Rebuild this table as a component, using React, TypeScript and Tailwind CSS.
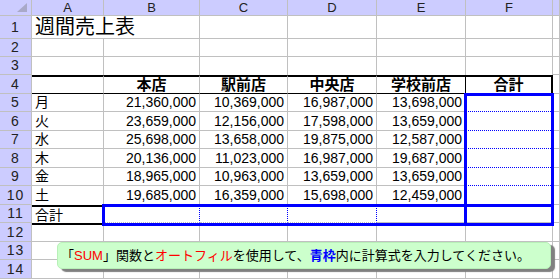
import clsx from 'clsx';

const cols = ['A', 'B', 'C', 'D', 'E', 'F', ''];

const sales: [string, string, string, string, string][] = [
  ['月', '21,360,000', '10,369,000', '16,987,000', '13,698,000'],
  ['火', '23,659,000', '12,156,000', '17,598,000', '13,659,000'],
  ['水', '25,698,000', '13,658,000', '19,875,000', '12,587,000'],
  ['木', '20,136,000', '11,023,000', '16,987,000', '19,687,000'],
  ['金', '18,965,000', '10,963,000', '13,659,000', '13,659,000'],
  ['土', '19,685,000', '16,359,000', '15,698,000', '12,459,000'],
];

const base =
  'border-r border-b border-[#c0c0c0] flex items-center overflow-hidden whitespace-nowrap';
const head = 'bg-[#ccccff] justify-center text-[13px] text-[#222]';

function Cell({
  className,
  children,
}: {
  className?: string;
  children?: React.ReactNode;
}) {
  return <div className={clsx(base, className)}>{children}</div>;
}

function RowHead({ n }: { n: number }) {
  return (
    <Cell className={clsx(head, 'text-[14px] tracking-[1px]')}>{n}</Cell>
  );
}

export default function App() {
  return (
    <div className="w-[560px] h-[280px] overflow-hidden bg-white font-['Liberation_Sans','Noto_Sans_CJK_JP',sans-serif] text-black">
      <div className="relative grid grid-cols-[32px_72px_96px_88px_89px_89px_87px_7px] grid-rows-[16px_23px_18px_18px_19px_18px_19px_18px_19px_18px_19px_18px_19px_18px_19px]">
        {/* column headers */}
        <Cell className={clsx(head, 'justify-end items-end')}>
          <svg width="12" height="10" viewBox="0 0 12 10" className="mb-[2px] mr-[3px]">
            <polygon points="11,0 11,9 1,9" fill="#a9a9c8" />
          </svg>
        </Cell>
        {cols.map((c, i) => (
          <Cell key={i} className={head}>
            {c}
          </Cell>
        ))}

        {/* row 1 */}
        <RowHead n={1} />
        <Cell className="text-[20px] pl-[3px] overflow-visible z-10 border-r-0">週間売上表</Cell>
        {cols.slice(1).map((_, i) => (
          <Cell key={i} />
        ))}

        {/* rows 2-3 */}
        <RowHead n={2} />
        {cols.map((_, i) => (
          <Cell key={i} />
        ))}
        <RowHead n={3} />
        {cols.map((_, i) => (
          <Cell key={i} className={i < 6 ? 'border-b-0' : ''} />
        ))}

        {/* row 4 */}
        <RowHead n={4} />
        <Cell className="border-t-2 border-t-black border-b-black" />
        {['本店', '駅前店', '中央店', '学校前店'].map((s, i) => (
          <Cell
            key={s}
            className={clsx(
              'border-t-2 border-t-black border-b-black justify-center font-bold text-[15px]',
              i === 3 && 'border-r-black',
            )}
          >
            {s}
          </Cell>
        ))}
        <Cell className="border-t-2 border-t-black border-r-2 border-r-black justify-center font-bold text-[15px]">
          合計
        </Cell>
        <Cell />

        {/* rows 5-10 */}
        {sales.map((r, ri) => (
          <div key={ri} className="contents">
            <RowHead n={ri + 5} />
            <Cell className={clsx('pl-[3px] text-[14px]', ri === 5 && 'border-b-0')}>
              {r[0]}
            </Cell>
            {r.slice(1).map((v, i) => (
              <Cell key={i} className="justify-end pr-[3px] text-[14px]">
                {v}
              </Cell>
            ))}
            <Cell
              className={clsx(ri < 5 && 'border-dotted border-b-[#0000ff]')}
            />
            <Cell />
          </div>
        ))}

        {/* row 11 */}
        <RowHead n={11} />
        <Cell className="pl-[3px] text-[14px] border-t-2 border-t-black border-b-0">
          合計
        </Cell>
        <Cell className="border-r-[#0000ff] border-dotted" />
        <Cell className="border-r-[#0000ff] border-dotted" />
        <Cell className="border-r-[#0000ff] border-dotted" />
        <Cell />
        <Cell />
        <Cell />

        {/* rows 12-14 */}
        <RowHead n={12} />
        <Cell className="border-t-2 border-t-black" />
        {cols.slice(1).map((_, i) => (
          <Cell key={i} />
        ))}
        <RowHead n={13} />
        {cols.map((_, i) => (
          <Cell key={i} />
        ))}
        <RowHead n={14} />
        {cols.map((_, i) => (
          <Cell key={i} />
        ))}

        {/* blue input frames */}
        <div className="absolute left-[464px] top-[93px] w-[90px] h-[133px] border-[3px] border-[#0000ff]" />
        <div className="absolute left-[102px] top-[204px] w-[452px] h-[22px] border-[3px] border-[#0000ff]" />

        {/* instruction callout */}
        <div className="absolute left-[57px] top-[242px] w-[494px] h-[27px] rounded-[5px] bg-[#ccffcc] border border-[#b8f0b8] shadow-[4px_3px_1px_#808080] flex items-center pl-[3px] text-[13px] whitespace-nowrap">
          <span>「</span>
          <span className="text-[#ff0000]">SUM</span>
          <span>」関数と</span>
          <span className="text-[#ff0000]">オートフィル</span>
          <span>を使用して、</span>
          <span className="text-[#0000ff] font-bold">青枠</span>
          <span>内に計算式を入力してください。</span>
        </div>
      </div>
    </div>
  );
}
